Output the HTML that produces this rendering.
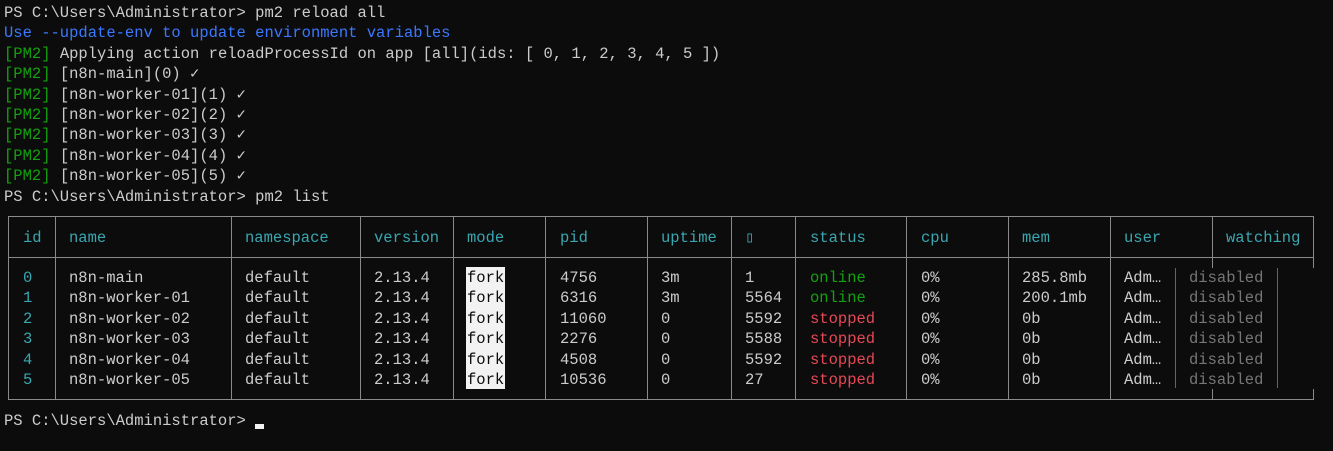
<!DOCTYPE html>
<html><head><meta charset="utf-8"><style>
html,body{margin:0;padding:0;background:#0c0c0c;width:1333px;height:451px;overflow:hidden}
body{position:relative;font-family:"Liberation Mono","DejaVu Sans Mono",monospace;font-size:15.5px;color:#cccccc}
.l{position:absolute;white-space:pre;line-height:20.4px}
.g{color:#13a10e}.b{color:#3b78ff}.r{color:#e74856}.c{color:#3aa6b0}.d{color:#767676}
.v{position:absolute;background:#8a8a8a;width:1px}
.h{position:absolute;background:#8a8a8a;height:1px}
.bl{position:absolute;background:#3a6f9a;width:1px}
.fork{position:absolute;left:466px;top:267px;width:39px;height:122px;background:#f2f2f2}
.fk{color:#0c0c0c}
</style></head><body>
<div class="l" style="left:4px;top:3px">PS C:\Users\Administrator&gt; pm2 reload all
<span class="b">Use --update-env to update environment variables</span>
<span class="g">[PM2]</span> Applying action reloadProcessId on app [all](ids: [ 0, 1, 2, 3, 4, 5 ])
<span class="g">[PM2]</span> [n8n-main](0) ✓
<span class="g">[PM2]</span> [n8n-worker-01](1) ✓
<span class="g">[PM2]</span> [n8n-worker-02](2) ✓
<span class="g">[PM2]</span> [n8n-worker-03](3) ✓
<span class="g">[PM2]</span> [n8n-worker-04](4) ✓
<span class="g">[PM2]</span> [n8n-worker-05](5) ✓
PS C:\Users\Administrator&gt; pm2 list</div>

<div class="h" style="left:8px;top:216px;width:1306px"></div>
<div class="h" style="left:8px;top:257px;width:1306px"></div>
<div class="h" style="left:8px;top:399px;width:1306px"></div>
<div class="v" style="left:8px;top:216px;height:184px"></div>
<div class="v" style="left:55px;top:216px;height:184px"></div>
<div class="v" style="left:231px;top:216px;height:184px"></div>
<div class="v" style="left:360px;top:216px;height:184px"></div>
<div class="v" style="left:453px;top:216px;height:184px"></div>
<div class="v" style="left:545px;top:216px;height:184px"></div>
<div class="v" style="left:647px;top:216px;height:184px"></div>
<div class="v" style="left:731px;top:216px;height:184px"></div>
<div class="v" style="left:795px;top:216px;height:184px"></div>
<div class="v" style="left:906px;top:216px;height:184px"></div>
<div class="v" style="left:1008px;top:216px;height:184px"></div>
<div class="v" style="left:1110px;top:216px;height:184px"></div>
<div class="v" style="left:1212px;top:216px;height:52px"></div>
<div class="v" style="left:1212px;top:389px;height:11px"></div>
<div class="v" style="left:1313px;top:216px;height:52px"></div>
<div class="v" style="left:1313px;top:389px;height:11px"></div>
<div class="bl" style="left:1175px;top:268px;height:120px"></div>
<div class="bl" style="left:1277px;top:268px;height:120px"></div>

<div class="l c" style="left:23px;top:228px">id</div>
<div class="l c" style="left:69px;top:228px">name</div>
<div class="l c" style="left:245px;top:228px">namespace</div>
<div class="l c" style="left:374px;top:228px">version</div>
<div class="l c" style="left:467px;top:228px">mode</div>
<div class="l c" style="left:560px;top:228px">pid</div>
<div class="l c" style="left:661px;top:228px">uptime</div>
<div class="l c" style="left:745px;top:228px">▯</div>
<div class="l c" style="left:810px;top:228px">status</div>
<div class="l c" style="left:921px;top:228px">cpu</div>
<div class="l c" style="left:1022px;top:228px">mem</div>
<div class="l c" style="left:1124px;top:228px">user</div>
<div class="l c" style="left:1226px;top:228px">watching</div>

<div class="fork"></div>

<div class="l c" style="left:23px;top:268px">0
1
2
3
4
5</div>
<div class="l" style="left:69px;top:268px">n8n-main
n8n-worker-01
n8n-worker-02
n8n-worker-03
n8n-worker-04
n8n-worker-05</div>
<div class="l" style="left:245px;top:268px">default
default
default
default
default
default</div>
<div class="l" style="left:374px;top:268px">2.13.4
2.13.4
2.13.4
2.13.4
2.13.4
2.13.4</div>
<div class="l fk" style="left:467px;top:268px">fork
fork
fork
fork
fork
fork</div>
<div class="l" style="left:560px;top:268px">4756
6316
11060
2276
4508
10536</div>
<div class="l" style="left:661px;top:268px">3m
3m
0
0
0
0</div>
<div class="l" style="left:745px;top:268px">1
5564
5592
5588
5592
27</div>
<div class="l" style="left:810px;top:268px"><span class="g">online
online</span>
<span class="r">stopped
stopped
stopped
stopped</span></div>
<div class="l" style="left:921px;top:268px">0%
0%
0%
0%
0%
0%</div>
<div class="l" style="left:1022px;top:268px">285.8mb
200.1mb
0b
0b
0b
0b</div>
<div class="l" style="left:1124px;top:268px">Adm…
Adm…
Adm…
Adm…
Adm…
Adm…</div>
<div class="l d" style="left:1189px;top:268px">disabled
disabled
disabled
disabled
disabled
disabled</div>

<div class="l" style="left:4px;top:411px">PS C:\Users\Administrator&gt; </div>
<div style="position:absolute;left:255px;top:424px;width:9px;height:5px;background:#f2f2f2"></div>
</body></html>
